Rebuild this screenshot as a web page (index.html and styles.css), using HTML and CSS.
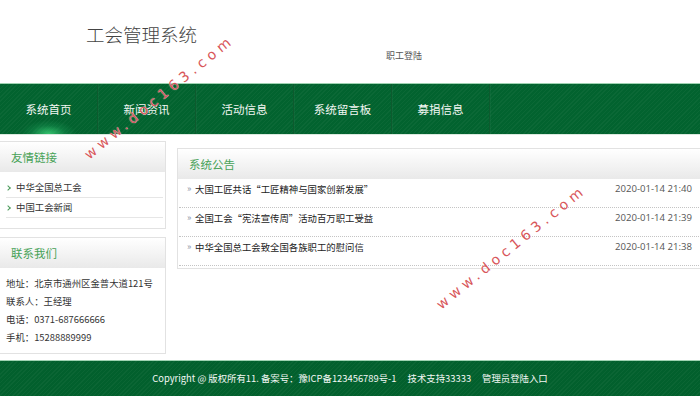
FILE: index.html
```html
<!DOCTYPE html>
<html lang="zh-CN">
<head>
<meta charset="utf-8">
<title>工会管理系统</title>
<link rel="stylesheet" href="styles.css">
</head>
<body>
<div class="page">
  <header class="top">
    <h1 class="site-title">工会管理系统</h1>
    <a class="login" href="#">职工登陆</a>
  </header>

  <nav class="nav">
    <a class="nav-item active" href="#">系统首页</a>
    <a class="nav-item" href="#">新闻资讯</a>
    <a class="nav-item" href="#">活动信息</a>
    <a class="nav-item" href="#">系统留言板</a>
    <a class="nav-item" href="#">募捐信息</a>
  </nav>

  <div class="content">
    <aside class="sidebar">
      <section class="box links-box">
        <h2 class="box-title">友情链接</h2>
        <ul class="links">
          <li><span class="chev"></span>中华全国总工会</li>
          <li><span class="chev"></span>中国工会新闻</li>
        </ul>
      </section>
      <section class="box contact-box">
        <h2 class="box-title">联系我们</h2>
        <ul class="contact">
          <li>地址：北京市通州区金普大道121号</li>
          <li>联系人：王经理</li>
          <li>电话：0371-687666666</li>
          <li>手机：15288889999</li>
        </ul>
      </section>
    </aside>

    <main class="main">
      <section class="box notice-box">
        <h2 class="box-title">系统公告</h2>
        <ul class="notices">
          <li><span class="raquo">»</span><span class="n-title">大国工匠共话“工匠精神与国家创新发展”</span><span class="n-date">2020-01-14 21:40</span></li>
          <li><span class="raquo">»</span><span class="n-title">全国工会“宪法宣传周”活动百万职工受益</span><span class="n-date">2020-01-14 21:39</span></li>
          <li><span class="raquo">»</span><span class="n-title">中华全国总工会致全国各族职工的慰问信</span><span class="n-date">2020-01-14 21:38</span></li>
        </ul>
      </section>
    </main>
  </div>

  <footer class="footer">
    Copyright @ 版权所有11. 备案号：豫ICP备123456789号-1<span class="sp"></span>技术支持33333<span class="sp"></span>管理员登陆入口
  </footer>

  <span class="watermark wm1">www.doc163.com</span>
  <span class="watermark wm2">www.doc163.com</span>
</div>
</body>
</html>
```

FILE: styles.css
```css
* { box-sizing: border-box; }
html, body { margin: 0; padding: 0; background: #fff; }
body {
  font-family: "Noto Sans CJK SC", "Noto Sans", sans-serif;
  color: #333;
  overflow: hidden;
}
ul { list-style: none; margin: 0; padding: 0; }
a { text-decoration: none; color: inherit; }

.page {
  position: relative;
  width: 700px;
  height: 411px;
  overflow: hidden;
}

/* header */
.top {
  height: 83px;
  padding: 21px 0 0 86px;
}
.site-title {
  margin: 0;
  font-size: 18.5px;
  font-weight: 300;
  line-height: 26px;
  color: #444;
}
.login {
  display: block;
  margin: 3px 0 0 300px;
  font-size: 9px;
  line-height: 12px;
  color: #555;
}

/* nav */
.nav {
  display: flex;
  height: 52px;
  border-top: 1px solid #9fd3b2;
  border-bottom: 1px solid #dbe9df;
  background-color: #02632f;
  background-image: repeating-linear-gradient(135deg, rgba(255,255,255,0.035) 0 1px, rgba(0,0,0,0) 1px 3px);
}
.nav-item {
  position: relative;
  width: 98px;
  display: flex;
  align-items: center;
  justify-content: center;
  font-size: 11.5px;
  color: #f2f7f3;
  border-right: 1px solid #0d5a2e;
  box-shadow: 1px 0 0 rgba(255,255,255,0.04);
}
.nav-item.active {
  background: radial-gradient(ellipse 28px 14px at 50% 100%, rgba(60,210,120,0.85), rgba(30,160,90,0.35) 60%, rgba(0,0,0,0) 100%);
}

/* content */
.content {
  display: flex;
  gap: 11px;
  width: 720px;
  padding-top: 6px;
}
.sidebar {
  width: 167px;
  margin-left: -1px;
  display: flex;
  flex-direction: column;
  gap: 8px;
}
.main {
  flex: 1;
  padding-top: 7px;
}
.box {
  border: 1px solid #e2e2e2;
  background: #fff;
}
.box-title {
  margin: 0;
  height: 30px;
  padding-left: 11px;
  font-size: 11.5px;
  font-weight: 400;
  line-height: 30px;
  color: #47a257;
  background: linear-gradient(#ffffff, #e9e9e9);
}

.links {
  padding: 2px 2px 10px 6px;
}
.links li {
  height: 20px;
  line-height: 19px;
  font-size: 9.4px;
  color: #333;
  border-bottom: 1px solid #e6e6e6;
  display: flex;
  align-items: center;
}
.links li:first-child { height: 24px; padding-top: 4px; }
.chev {
  display: inline-block;
  width: 4px;
  height: 4px;
  border-top: 1px solid #4a9a5a;
  border-right: 1px solid #4a9a5a;
  transform: rotate(45deg);
  margin: 0 6px 0 0;
}

.contact {
  padding: 6px 0 7px 6px;
}
.contact li {
  height: 18px;
  line-height: 18px;
  font-size: 9.4px;
  color: #333;
}

.notice-box { height: 121px; }
.notices { padding: 0 0 0 1px; }
.notices li {
  display: flex;
  align-items: flex-start;
  height: 29px;
  line-height: 20px;
  border-bottom: 1px dotted #c4c4c4;
  padding-left: 8px;
  padding-right: 27px;
}
.raquo {
  font-size: 9px;
  color: #8a93a8;
  width: 8px;
  line-height: 20px;
}
.n-title {
  flex: 1;
  font-size: 9.4px;
  color: #222;
}
.n-date {
  font-family: "Open Sans", "Noto Sans", sans-serif;
  font-size: 9.6px;
  color: #555;
}

/* footer */
.footer {
  margin-top: 6px;
  height: 36px;
  border-top: 1px solid #9fd3b2;
  background-color: #02602d;
  background-image: repeating-linear-gradient(135deg, rgba(255,255,255,0.035) 0 1px, rgba(0,0,0,0) 1px 3px);
  color: #f4f8f5;
  font-size: 9.4px;
  line-height: 34px;
  text-align: center;
}
.sp { display: inline-block; width: 11px; }

/* watermark overlay */
.watermark {
  position: absolute;
  font-family: "DejaVu Sans", sans-serif;
  font-size: 14px;
  letter-spacing: 4.6px;
  color: #d8565a;
  line-height: 16px;
  transform-origin: 0 50%;
  transform: rotate(-39deg);
  white-space: nowrap;
  text-shadow: 0 0 1px #fff;
}
.wm1 { left: 86px; top: 148px; }
.wm2 { left: 438px; top: 298px; }
```
